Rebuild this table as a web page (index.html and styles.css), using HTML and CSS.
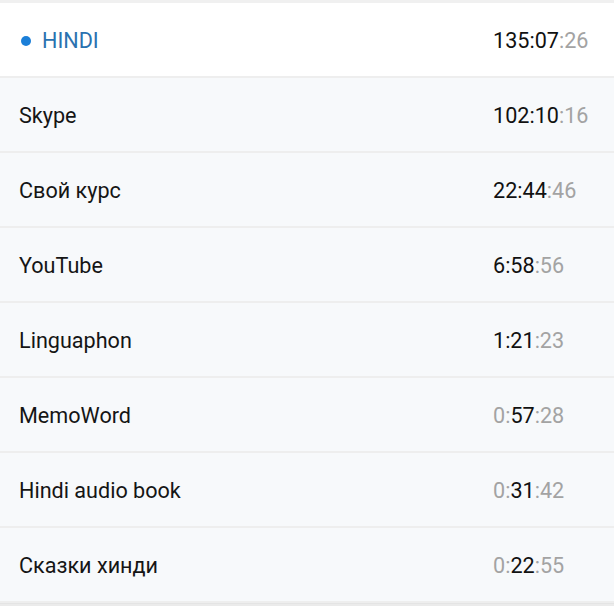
FILE: index.html
```html
<!DOCTYPE html>
<html>
<head>
<meta charset="utf-8">
<link rel="stylesheet" href="styles.css">
</head>
<body>
<div class="list">
  <div class="row row-active">
    <div class="name"><span class="dot"></span><span class="name-active">HINDI</span></div>
    <div class="time">135:07<span class="dim">:26</span></div>
  </div>
  <div class="row">
    <div class="name">Skype</div>
    <div class="time">102:10<span class="dim">:16</span></div>
  </div>
  <div class="row">
    <div class="name">Свой курс</div>
    <div class="time">22:44<span class="dim">:46</span></div>
  </div>
  <div class="row">
    <div class="name">YouTube</div>
    <div class="time">6:58<span class="dim">:56</span></div>
  </div>
  <div class="row">
    <div class="name">Linguaphon</div>
    <div class="time">1:21<span class="dim">:23</span></div>
  </div>
  <div class="row">
    <div class="name">MemoWord</div>
    <div class="time"><span class="dim">0:</span>57<span class="dim">:28</span></div>
  </div>
  <div class="row">
    <div class="name">Hindi audio book</div>
    <div class="time"><span class="dim">0:</span>31<span class="dim">:42</span></div>
  </div>
  <div class="row">
    <div class="name">Сказки хинди</div>
    <div class="time"><span class="dim">0:</span>22<span class="dim">:55</span></div>
  </div>
</div>
</body>
</html>
```
FILE: styles.css
```css
html, body {
  margin: 0;
  padding: 0;
}
body {
  background: #ebebeb;
  font-family: Roboto, "Noto Sans", sans-serif;
  width: 614px;
  height: 606px;
  overflow: hidden;
}
.list {
  border-top: 3px solid #f0f0f0;
  border-bottom: 1px solid #e4e4e4;
  background: #f7f9fb;
}
.row {
  height: 73px;
  border-bottom: 2px solid #eeeeee;
  display: flex;
  align-items: center;
  padding: 1px 0 0 19px;
  box-sizing: border-box;
  height: 75px;
  background: #f7f9fb;
  font-size: 21.6px;
  color: #151515;
}
.row-active {
  background: #ffffff;
}
.name {
  display: flex;
  align-items: center;
  flex: 1;
}
.dot {
  width: 10px;
  height: 10px;
  border-radius: 50%;
  background: #1b7fd8;
  margin: 2px 11px 0 2px;
}
.name-active {
  color: #2a72b0;
}
.time {
  width: 121px;
  color: #111111;
}
.dim {
  color: #a3a3a3;
}
```
